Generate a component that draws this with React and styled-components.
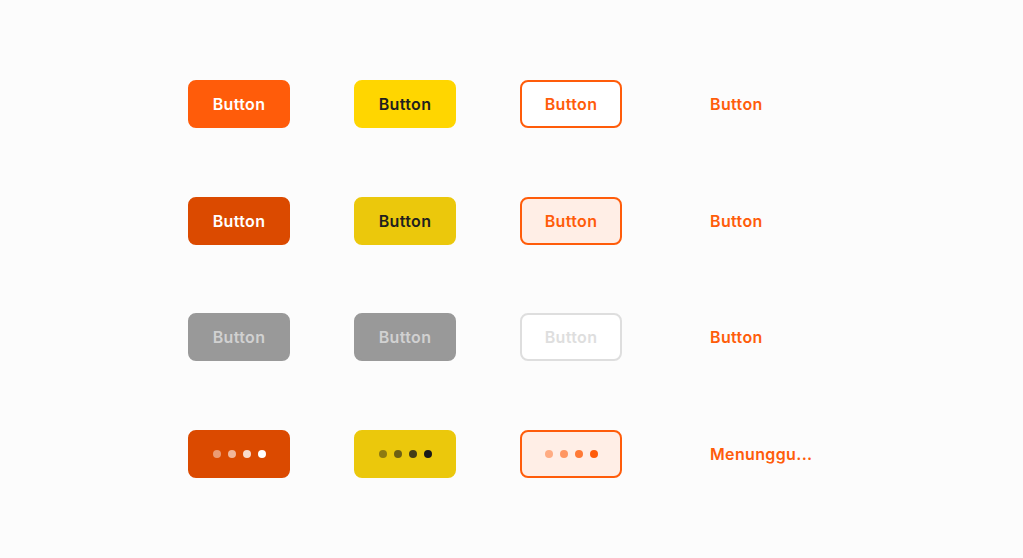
import React from "react";
import styled, { createGlobalStyle, css } from "styled-components";

const Global = createGlobalStyle`
  html, body { margin: 0; padding: 0; background: #fcfcfc; }
  body { font-family: Inter, "Noto Sans", sans-serif; }
`;

const Page = styled.div`
  box-sizing: border-box;
  height: 558px;
  padding: 80px 0 80px 188px;
  display: flex;
  flex-direction: column;
  justify-content: space-between;
`;

const Row = styled.div`
  display: grid;
  grid-template-columns: repeat(4, 102px);
  column-gap: 64px;
  height: 48px;
`;

const variants = {
  primary: css`background: #ff5c0a; color: #ffffff; border-color: #ff5c0a;`,
  primaryPressed: css`background: #db4a00; color: #ffffff; border-color: #db4a00;`,
  secondary: css`background: #ffd600; color: #1f1f1f; border-color: #ffd600;`,
  secondaryPressed: css`background: #ebc80c; color: #1f1f1f; border-color: #ebc80c;`,
  disabled: css`background: #999999; color: #d1d1d1; border-color: #999999;`,
  outline: css`background: #ffffff; color: #ff5c0a; border-color: #ff5c0a;`,
  outlinePressed: css`background: #ffeee6; color: #ff5c0a; border-color: #ff5c0a;`,
  outlineDisabled: css`background: #ffffff; color: #dedede; border-color: #dedede;`,
  ghost: css`background: transparent; color: #ff5c0a; border-color: transparent; justify-content: flex-start; overflow: visible; white-space: nowrap;`,
};

const Btn = styled.div`
  box-sizing: border-box;
  width: 102px;
  height: 48px;
  border-radius: 8px;
  border: 2px solid transparent;
  display: flex;
  align-items: center;
  justify-content: center;
  padding: 0 22px;
  font-size: 16px;
  font-weight: 600;
  letter-spacing: 0.35px;
  line-height: 20px;
  ${(p) => variants[p.$v]}
`;

const Dots = styled.div`
  display: flex;
  gap: 7px;
`;

const Dot = styled.span`
  width: 8px;
  height: 8px;
  border-radius: 50%;
  background: ${(p) => p.$c};
  opacity: ${(p) => p.$o};
`;

const Loader = ({ color }) => (
  <Dots>
    {[0.45, 0.6, 0.8, 1].map((o) => (
      <Dot key={o} $c={color} $o={o} />
    ))}
  </Dots>
);

export default function App() {
  return (
    <>
      <Global />
      <Page>
        <Row>
          <Btn $v="primary">Button</Btn>
          <Btn $v="secondary">Button</Btn>
          <Btn $v="outline">Button</Btn>
          <Btn $v="ghost">Button</Btn>
        </Row>
        <Row>
          <Btn $v="primaryPressed">Button</Btn>
          <Btn $v="secondaryPressed">Button</Btn>
          <Btn $v="outlinePressed">Button</Btn>
          <Btn $v="ghost">Button</Btn>
        </Row>
        <Row>
          <Btn $v="disabled">Button</Btn>
          <Btn $v="disabled">Button</Btn>
          <Btn $v="outlineDisabled">Button</Btn>
          <Btn $v="ghost">Button</Btn>
        </Row>
        <Row>
          <Btn $v="primaryPressed"><Loader color="#ffffff" /></Btn>
          <Btn $v="secondaryPressed"><Loader color="#1a1a1a" /></Btn>
          <Btn $v="outlinePressed"><Loader color="#ff5c0a" /></Btn>
          <Btn $v="ghost">Menunggu...</Btn>
        </Row>
      </Page>
    </>
  );
}
